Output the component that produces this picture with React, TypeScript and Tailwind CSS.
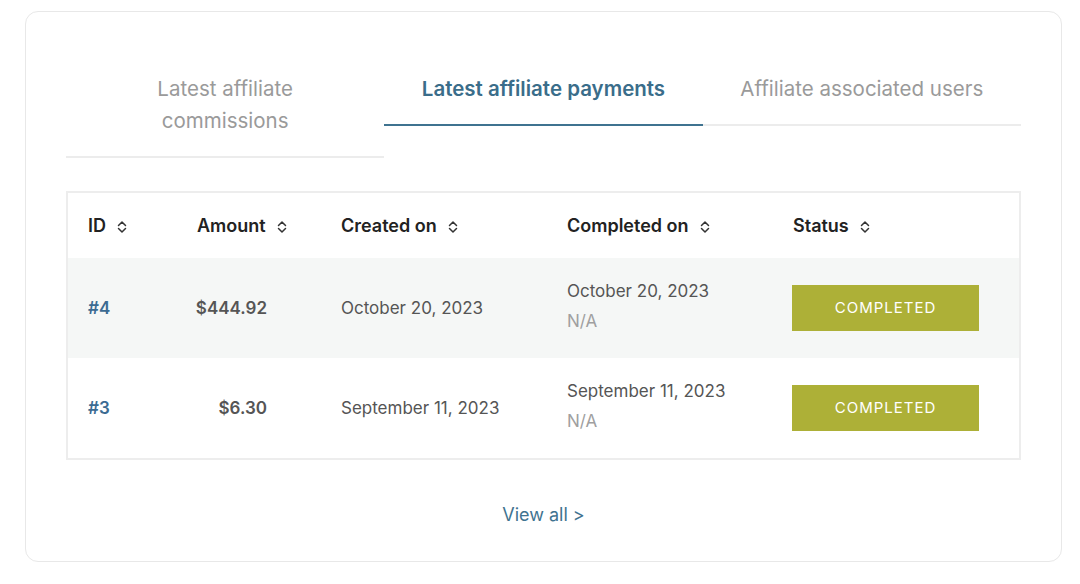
import React from 'react'

const font = { fontFamily: 'Inter, "Noto Sans", sans-serif' }

// small up/down chevron used in sortable headers
function SortIcon() {
  return (
    <svg width="12" height="14" viewBox="0 0 12 14" fill="none" className="ml-[10px] mt-[3px]">
      <path d="M2.5 5.5 L6 2 L9.5 5.5" stroke="#333" strokeWidth="1.5" strokeLinecap="round" strokeLinejoin="round" />
      <path d="M2.5 8.5 L6 12 L9.5 8.5" stroke="#333" strokeWidth="1.5" strokeLinecap="round" strokeLinejoin="round" />
    </svg>
  )
}

const tabs = [
  { label: 'Latest affiliate\ncommissions', active: false },
  { label: 'Latest affiliate payments', active: true },
  { label: 'Affiliate associated users', active: false },
]

const payments = [
  { id: '#4', amount: '$444.92', created: 'October 20, 2023', completed: 'October 20, 2023', shaded: true },
  { id: '#3', amount: '$6.30', created: 'September 11, 2023', completed: 'September 11, 2023', shaded: false },
]

const cols = 'grid grid-cols-[109px_144px_226px_226px_1fr]'

export default function App() {
  return (
    <div className="w-[1080px] h-[584px] bg-white pt-[11px] pl-[25px]" style={font}>
      <div className="w-[1037px] h-[551px] border border-[#e8e8e8] rounded-[13px] px-[40px] pt-[61px]">
        {/* tabs */}
        <div className="flex items-start">
          {tabs.map((t) => (
            <div
              key={t.label}
              className={
                'flex-1 text-center text-[20.5px] leading-[32px] whitespace-pre-line pb-[19px] border-b-2 ' +
                (t.active
                  ? 'border-[#3f7390] text-[#3a6d8a] font-semibold'
                  : 'border-[#ececec] text-[#9a9a9a]')
              }
            >
              {t.label}
            </div>
          ))}
        </div>

        {/* table */}
        <div className="mt-[33px] border-2 border-[#ededed]">
          <div className={cols + ' h-[65px] items-center text-[18px] font-semibold text-[#222]'}>
            <div className="flex items-center pl-[20px]">ID<SortIcon /></div>
            <div className="flex items-center pl-[20px]">Amount<SortIcon /></div>
            <div className="flex items-center pl-[20px]">Created on<SortIcon /></div>
            <div className="flex items-center pl-[20px]">Completed on<SortIcon /></div>
            <div className="flex items-center pl-[20px]">Status<SortIcon /></div>
          </div>
          {payments.map((p) => (
            <div
              key={p.id}
              className={cols + ' h-[100px] items-center text-[17px] ' + (p.shaded ? 'bg-[#f5f7f6]' : 'bg-white')}
            >
              <div className="pl-[20px] pt-[1px] font-semibold text-[#3b6b92]">{p.id}</div>
              <div className="pr-[54px] pt-[1px] text-right font-semibold text-[#555]">{p.amount}</div>
              <div className="pl-[20px] pt-[1px] text-[#555]">{p.created}</div>
              <div className="pl-[20px] pb-[4px] flex flex-col leading-[30px]">
                <span className="text-[#555]">{p.completed}</span>
                <span className="text-[#a0a0a0]">N/A</span>
              </div>
              <div className="pl-[19px]">
                <div className="w-[187px] h-[46px] bg-[#adb037] flex items-center justify-center text-white text-[15px] tracking-[1px]">
                  COMPLETED
                </div>
              </div>
            </div>
          ))}
        </div>

        {/* footer link */}
        <div className="mt-[43px] text-center text-[18px] leading-[24px] text-[#3f7390]">
          View all &gt;
        </div>
      </div>
    </div>
  )
}
